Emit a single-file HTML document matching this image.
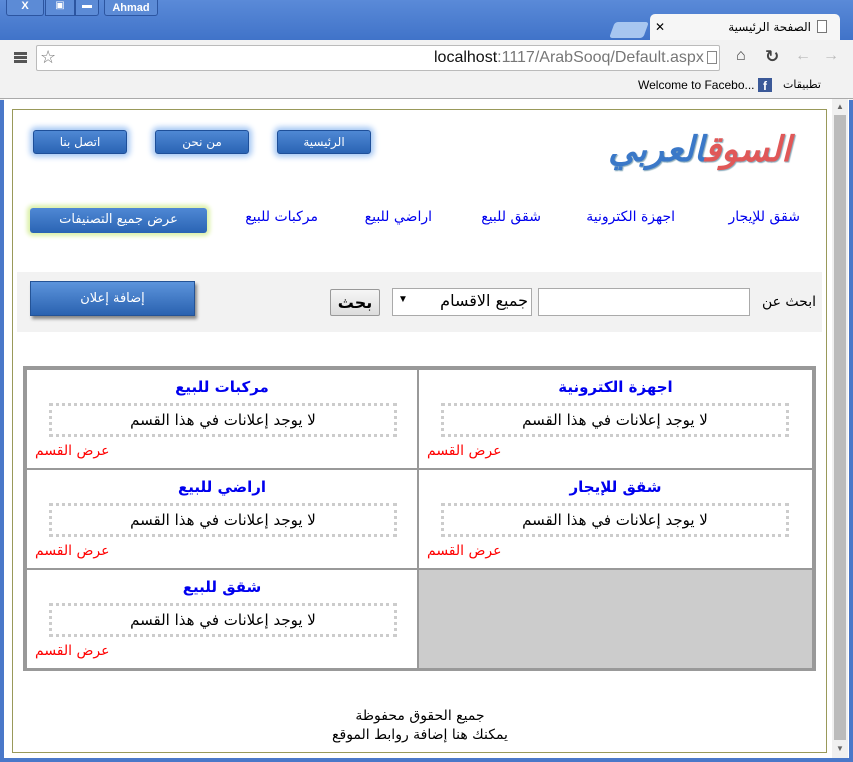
<!DOCTYPE html>
<html><head><meta charset="utf-8"><style>
*{margin:0;padding:0;box-sizing:border-box}
body{width:853px;height:762px;position:relative;overflow:hidden;background:#4a78c9;font-family:"Liberation Sans","DejaVu Sans",sans-serif}
.a{position:absolute}
.ar{font-family:"DejaVu Sans","Noto Sans CJK SC",sans-serif;direction:rtl;white-space:nowrap}
.nb{position:absolute;height:24px;width:94px;background:linear-gradient(#4f88d4,#2a64b4);border:1px solid #1e4f99;border-radius:3px;color:#fff;font-size:12px;text-align:center;line-height:22px;box-shadow:0 0 6px 3px #a6c8f4}
.cell{position:absolute;width:395px;height:100px;background:#fff;border:1px solid #999}
.cell .t{position:absolute;top:8px;left:0;right:0;text-align:center;color:#00e;font-size:15px;font-weight:bold}
.cell .b{position:absolute;top:33px;left:22px;width:348px;height:34px;border:3px dotted #ccc;text-align:center;line-height:28px;font-size:15px;color:#000}
.cell .l{position:absolute;top:73px;left:8px;color:#f00;font-size:14px}
</style></head><body>
<div class="a" style="left:0;top:0;width:853px;height:42px;background:linear-gradient(#5a8ad8,#3f72c8)"></div>
<div class="a" style="left:6px;top:0;width:38px;height:16px;background:#5c8bd6;border:1px solid #2c55a0;border-top:0;border-radius:0 0 3px 3px;color:#fff;font-size:11px;text-align:center;font-weight:bold">X</div>
<div class="a" style="left:45px;top:0;width:30px;height:16px;background:#5c8bd6;border:1px solid #2c55a0;border-top:0;color:#fff;font-size:10px;text-align:center">▣</div>
<div class="a" style="left:75px;top:0;width:24px;height:16px;background:#5c8bd6;border:1px solid #2c55a0;border-top:0;border-radius:0 0 3px 0;color:#fff;font-size:10px;text-align:center">▬</div>
<div class="a" style="left:104px;top:0;width:54px;height:16px;background:#5c8bd6;border:1px solid #2c55a0;border-top:0;border-radius:0 0 3px 3px;color:#fff;font-size:11px;font-weight:bold;text-align:center;line-height:16px">Ahmad</div>
<div class="a" style="left:612px;top:22px;width:34px;height:16px;background:#a7c6f0;transform:skewX(-20deg);border-radius:3px"></div>
<div class="a" style="left:650px;top:14px;width:190px;height:28px;background:#f6f6f6;border-radius:5px 5px 0 0"></div>
<div class="a" style="left:655px;top:20px;font-size:12px">✕</div>
<div class="a ar" style="right:42px;top:20px;font-size:12px">الصفحة الرئيسية</div>
<div class="a" style="left:817px;top:20px;width:10px;height:13px;border:1px solid #777;background:#fff"></div>
<div class="a" style="left:0;top:40px;width:853px;height:60px;background:#f2f2f2"></div>
<div class="a" style="left:14px;top:52px;width:13px;height:11px;border-top:3px solid #555;border-bottom:3px solid #555"></div>
<div class="a" style="left:14px;top:56px;width:13px;height:3px;background:#555"></div>
<div class="a" style="left:36px;top:45px;width:684px;height:26px;background:#fff;border:1px solid #bbb;border-radius:2px"></div>
<div class="a" style="left:40px;top:47px;font-size:18px;color:#777">☆</div>
<div class="a" style="left:434px;top:49px;font-size:16px;color:#111">localhost<span style="color:#777">:1117/ArabSooq/Default.aspx</span></div>
<div class="a" style="left:707px;top:51px;width:10px;height:13px;border:1px solid #888"></div>
<div class="a" style="left:736px;top:47px;font-size:16px;color:#444">⌂</div>
<div class="a" style="left:765px;top:47px;font-size:17px;color:#444;font-weight:bold">↻</div>
<div class="a" style="left:795px;top:47px;font-size:16px;color:#bbb">←</div>
<div class="a" style="left:823px;top:47px;font-size:16px;color:#bbb">→</div>
<div class="a" style="left:638px;top:78px;font-size:12px">Welcome to Facebo...</div>
<div class="a" style="left:758px;top:78px;width:14px;height:14px;background:#3b5998;color:#fff;font-size:12px;font-weight:bold;text-align:center;line-height:16px">f</div>
<div class="a ar" style="right:32px;top:78px;font-size:11px">تطبيقات</div>
<div class="a" style="left:0;top:98px;width:853px;height:1px;background:#aaa"></div>
<div class="a" style="left:4px;top:99px;width:845px;height:659px;background:#fff"></div>
<div class="a" style="left:832px;top:99px;width:16px;height:659px;background:#f0f0f0"></div>
<div class="a" style="left:834px;top:115px;width:12px;height:625px;background:#bbb"></div>
<div class="a" style="left:836px;top:102px;font-size:8px;color:#666">▲</div>
<div class="a" style="left:836px;top:744px;font-size:8px;color:#666">▼</div>
<div class="a" style="left:12px;top:109px;width:815px;height:644px;border:1px solid #99995a"></div>

<div class="nb ar" style="left:277px;top:130px">الرئيسية</div>
<div class="nb ar" style="left:155px;top:130px">من نحن</div>
<div class="nb ar" style="left:33px;top:130px">اتصل بنا</div>
<div class="a ar" style="right:62px;top:130px;font-size:35px;font-weight:bold;font-style:italic;color:#3a78c8;text-shadow:1px 1px 1px #8ab"><span style="color:#e05858">السوق</span>العربي</div>

<div class="a ar" style="right:53px;top:209px;font-size:14px;color:#00e">شقق للإيجار</div>
<div class="a ar" style="right:178px;top:209px;font-size:14px;color:#00e">اجهزة الكترونية</div>
<div class="a ar" style="right:312px;top:209px;font-size:14px;color:#00e">شقق للبيع</div>
<div class="a ar" style="right:421px;top:209px;font-size:14px;color:#00e">اراضي للبيع</div>
<div class="a ar" style="right:535px;top:209px;font-size:14px;color:#00e">مركبات للبيع</div>
<div class="a ar" style="left:30px;top:208px;width:177px;height:25px;background:linear-gradient(#4f88d4,#2a64b4);border-radius:3px;color:#fff;font-size:13px;text-align:center;line-height:24px;box-shadow:0 0 4px 3px #dcf0a8">عرض جميع التصنيفات</div>

<div class="a" style="left:17px;top:272px;width:805px;height:60px;background:#f2f2f2"></div>
<div class="a ar" style="left:30px;top:281px;width:165px;height:35px;background:linear-gradient(#5c94dc,#2a62b0);border:1px solid #245396;color:#fff;font-size:13px;text-align:center;line-height:33px;box-shadow:2px 3px 3px #888">إضافة إعلان</div>
<div class="a ar" style="right:37px;top:294px;font-size:14px">ابحث عن</div>
<div class="a" style="left:538px;top:288px;width:212px;height:28px;background:#fff;border:1px solid #aaa"></div>
<div class="a" style="left:392px;top:288px;width:140px;height:28px;background:#fff;border:1px solid #aaa"></div>
<div class="a ar" style="right:325px;top:291px;font-size:16px">جميع الاقسام</div>
<div class="a" style="left:398px;top:294px;font-size:10px">▼</div>
<div class="a ar" style="left:330px;top:289px;width:50px;height:27px;background:linear-gradient(#f6f6f6,#ddd);border:1px solid #999;border-radius:2px;text-align:center;font-size:16px;font-weight:bold;line-height:25px">بحث</div>

<div class="a" style="left:23px;top:366px;width:793px;height:305px;background:#999"></div>
<div class="cell ar" style="left:418px;top:369px"><div class="t">اجهزة الكترونية</div><div class="b">لا يوجد إعلانات في هذا القسم</div><div class="l">عرض القسم</div></div>
<div class="cell ar" style="left:26px;top:369px;width:392px"><div class="t">مركبات للبيع</div><div class="b">لا يوجد إعلانات في هذا القسم</div><div class="l">عرض القسم</div></div>
<div class="cell ar" style="left:418px;top:469px"><div class="t">شقق للإيجار</div><div class="b">لا يوجد إعلانات في هذا القسم</div><div class="l">عرض القسم</div></div>
<div class="cell ar" style="left:26px;top:469px;width:392px"><div class="t">اراضي للبيع</div><div class="b">لا يوجد إعلانات في هذا القسم</div><div class="l">عرض القسم</div></div>
<div class="cell" style="left:418px;top:569px;background:#ccc"></div>
<div class="cell ar" style="left:26px;top:569px;width:392px"><div class="t">شقق للبيع</div><div class="b">لا يوجد إعلانات في هذا القسم</div><div class="l">عرض القسم</div></div>

<div class="a ar" style="left:0;width:840px;top:708px;text-align:center;font-size:14px">جميع الحقوق محفوظة</div>
<div class="a ar" style="left:0;width:840px;top:727px;text-align:center;font-size:14px">يمكنك هنا إضافة روابط الموقع</div>
</body></html>
